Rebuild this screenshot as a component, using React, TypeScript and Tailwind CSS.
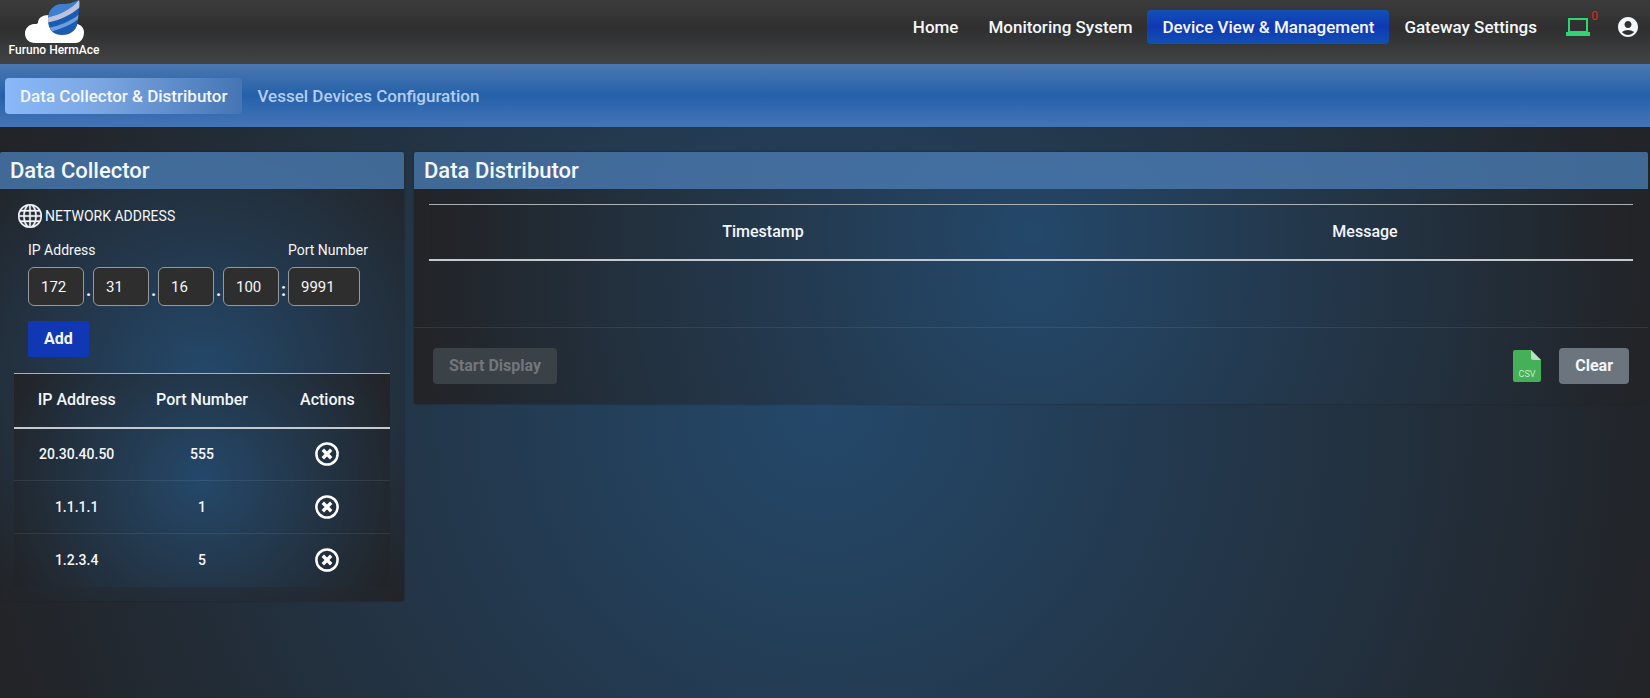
import { useState } from 'react';
import { BsGlobe } from 'react-icons/bs';
import { MdAccountCircle } from 'react-icons/md';

type Address = {
    ip: string;
    port: string;
};

const navItems = [
    'Home',
    'Monitoring System',
    'Device View & Management',
    'Gateway Settings',
];

const initialAddresses: Address[] = [
    { ip: '20.30.40.50', port: '555' },
    { ip: '1.1.1.1', port: '1' },
    { ip: '1.2.3.4', port: '5' },
];

function Logo() {
    return (
        <a href="#" className="flex w-22 flex-col items-center text-white">
            <svg viewBox="0 0 60 44" className="h-11 w-15">
                <path
                    d="M11 43C5 43 1 39 1 33.500C1 28 5 24.500 10 24C12 24 13 24 14 23C14 18 18 15 25 15L50 23C56 24 60 27 60 32C60 38 57 43 51 43Z"
                    fill="#fff"
                />
                <clipPath id="planet">
                    <path d="M24 20C24 10 30 4 38 4C43 4 47 4 55 0C56 5 55 10 54 19C54 29 48 35 38 35C29 35 24 29 24 20Z" />
                </clipPath>
                <g clipPath="url(#planet)">
                    <rect x="20" width="38" height="38" fill="#1c5cb0" />
                    <path d="M20 0H58V2C48 12 36 17 22 19Z" fill="#3f7fcd" />
                    <path
                        d="M22 18C36 15 47 10 56 -1L57 6C49 14 37 20 22 23Z"
                        fill="#bcc3dc"
                    />
                    <path
                        d="M24 28C36 26 47 21 57 13V17C48 25 37 29 26 32Z"
                        fill="#6d9fdf"
                    />
                </g>
            </svg>
            <span className="text-[12px] leading-3 font-medium whitespace-nowrap">
                Furuno HermAce
            </span>
        </a>
    );
}

function LaptopIcon() {
    return (
        <svg viewBox="0 0 24 18" className="h-[18px] w-6" fill="#2fd573">
            <path
                d="M2 0H22V14H24V18H0V14H2ZM4 2V13H20V2Z"
                fillRule="evenodd"
            />
        </svg>
    );
}

function DeleteIcon() {
    return (
        <svg
            viewBox="0 0 24 24"
            className="size-6"
            fill="none"
            stroke="#fff"
        >
            <circle cx="12" cy="12" r="10.600" strokeWidth="2.500" />
            <path
                d="M7.800 7.800L16.200 16.200M16.200 7.800L7.800 16.200"
                strokeWidth="3.400"
            />
        </svg>
    );
}

function CsvIcon() {
    return (
        <svg viewBox="0 0 28 32" className="h-8 w-7">
            <path
                d="M2 0H18L28 10V30Q28 32 26 32H2Q0 32 0 30V2Q0 0 2 0Z"
                fill="#45b058"
            />
            <path d="M18 0L28 10H20Q18 10 18 8Z" fill="#b5dfbd" />
            <text
                x="14"
                y="27"
                textAnchor="middle"
                fontSize="9"
                fontWeight="400"
                fill="#c4ecca"
            >
                CSV
            </text>
        </svg>
    );
}

function PanelTitle({ children }: { children: string }) {
    return (
        <h2 className="rounded-t-xs bg-[#4a7ab2]/80 px-[10px] py-1 text-[22px] leading-[29px] font-medium">
            {children}
        </h2>
    );
}

function OctetInput({
    id,
    label,
    defaultValue,
}: {
    id: string;
    label?: string;
    defaultValue: string;
}) {
    return (
        <input
            id={id}
            type="text"
            aria-label={label}
            defaultValue={defaultValue}
            className="h-[39px] w-14 rounded-md border border-[#96999d] bg-[#2f2e2f] px-3 text-[15px]"
        />
    );
}

function Separator({ children }: { children: string }) {
    return (
        <span className="w-[9px] text-center text-lg leading-8 font-bold">
            {children}
        </span>
    );
}

function DataCollector() {
    const [addresses, setAddresses] = useState(initialAddresses);

    return (
        <section className="w-[404px] shrink-0 rounded-xs bg-[radial-gradient(circle,#24486a,#222326)] shadow-[0_0_2px_#1b2026]">
            <PanelTitle>Data Collector</PanelTitle>
            <div className="px-[14px] pt-[15px] pb-[14px]">
                <div className="flex items-center gap-[3px] pl-1 text-[14px] leading-6">
                    <BsGlobe className="size-6" strokeWidth={0.2} />
                    NETWORK ADDRESS
                </div>

                <div className="mt-3 flex pl-[14px] text-[14px] leading-5">
                    <div>
                        <label htmlFor="octet-1">IP Address</label>
                        <div className="mt-[7px] flex items-end">
                            <OctetInput id="octet-1" defaultValue="172" />
                            <Separator>.</Separator>
                            <OctetInput
                                id="octet-2"
                                label="Octet 2"
                                defaultValue="31"
                            />
                            <Separator>.</Separator>
                            <OctetInput
                                id="octet-3"
                                label="Octet 3"
                                defaultValue="16"
                            />
                            <Separator>.</Separator>
                            <OctetInput
                                id="octet-4"
                                label="Octet 4"
                                defaultValue="100"
                            />
                            <Separator>:</Separator>
                        </div>
                    </div>
                    <div>
                        <label htmlFor="port">Port Number</label>
                        <input
                            id="port"
                            type="text"
                            defaultValue="9991"
                            className="mt-[7px] block h-[39px] w-18 rounded-md border border-[#96999d] bg-[#2f2e2f] px-3 text-[15px]"
                        />
                    </div>
                </div>

                <button
                    type="button"
                    className="mt-[15px] ml-[14px] block h-9 rounded-xs bg-[#1038b4] px-4 font-bold"
                >
                    Add
                </button>

                <table className="mt-4 w-full table-fixed bg-[radial-gradient(circle,#24486a,#222326)] text-center">
                    <thead>
                        <tr className="h-[54px] border-t border-b-2 border-t-[#a9b0b6] border-b-[#c3c9ce]">
                            <th className="font-medium">IP Address</th>
                            <th className="font-medium">Port Number</th>
                            <th className="font-medium">Actions</th>
                        </tr>
                    </thead>
                    <tbody className="text-[14px] font-medium">
                        {addresses.map((address) => (
                            <tr
                                key={address.ip}
                                className="h-[53px] border-b border-white/8 last:border-b-0"
                            >
                                <td>{address.ip}</td>
                                <td>{address.port}</td>
                                <td>
                                    <button
                                        type="button"
                                        aria-label={`Delete ${address.ip}`}
                                        onClick={() =>
                                            setAddresses((current) =>
                                                current.filter(
                                                    (item) => item !== address,
                                                ),
                                            )
                                        }
                                        className="mx-auto block"
                                    >
                                        <DeleteIcon />
                                    </button>
                                </td>
                            </tr>
                        ))}
                    </tbody>
                </table>
            </div>
        </section>
    );
}

function DataDistributor() {
    return (
        <section className="min-w-0 flex-1 rounded-xs bg-[radial-gradient(circle,#24486a,#222326)] shadow-[0_0_2px_#1b2026]">
            <PanelTitle>Data Distributor</PanelTitle>
            <div className="px-[15px] pt-[15px] pb-[66px]">
                <table className="w-full table-fixed bg-[radial-gradient(circle,#24486a,#222326)]">
                    <thead>
                        <tr className="h-[55px] border-t border-b-2 border-t-[#a9b0b6] border-b-[#c3c9ce]">
                            <th className="pl-[66px] font-medium">Timestamp</th>
                            <th className="pl-[66px] font-medium">Message</th>
                        </tr>
                    </thead>
                </table>
            </div>
            <div className="flex items-center justify-between border-t border-white/8 px-[19px] py-5 font-bold">
                <button
                    type="button"
                    disabled
                    className="h-9 rounded-sm bg-[#3a4147] px-4 text-[#71777c]"
                >
                    Start Display
                </button>
                <div className="flex items-center gap-[18px]">
                    <button type="button" aria-label="CSV">
                        <CsvIcon />
                    </button>
                    <button
                        type="button"
                        className="h-9 rounded-sm bg-[#6c757d] px-4"
                    >
                        Clear
                    </button>
                </div>
            </div>
        </section>
    );
}

export default function App() {
    return (
        <div className="flex min-h-screen flex-col bg-[#222326] font-[Roboto,sans-serif] text-[#f4f7fa]">
            <header className="flex h-16 items-start justify-between bg-linear-to-b from-[#3c3c3c] via-[#2f2f2f] via-45% to-[#414345] px-[10px]">
                <Logo />
                <nav className="mt-[10px] flex items-center text-[17px] font-medium">
                    {navItems.map((item) => (
                        <a
                            key={item}
                            href="#"
                            className={`rounded-sm px-[15px] py-[5px] leading-6 ${
                                item === 'Device View & Management'
                                    ? 'bg-linear-to-b from-[#1250b8] via-[#1038b4] to-[#1250b4]'
                                    : ''
                            }`}
                        >
                            {item}
                        </a>
                    ))}
                    <a href="#" className="relative ml-[14px]">
                        <LaptopIcon />
                        <span className="absolute -top-2 -right-2 text-[12px] leading-3 font-normal text-[#e0281c]">
                            0
                        </span>
                    </a>
                    <a href="#" className="ml-[26px]">
                        <MdAccountCircle className="size-6" />
                    </a>
                </nav>
            </header>

            <nav className="flex h-[63px] items-center bg-linear-to-b from-[#4a77b0] via-[#2461aa] to-[#4574b6] pl-[5px] text-[17px] font-medium">
                <a
                    href="#"
                    className="rounded-sm bg-linear-to-r from-[#8ab8f8] via-[#7ba6e2] via-40% to-[#4575b4] px-[15px] py-[6px] leading-6"
                >
                    Data Collector &amp; Distributor
                </a>
                <a
                    href="#"
                    className="px-[15px] py-[6px] leading-6 text-[#b5cdf0]"
                >
                    Vessel Devices Configuration
                </a>
            </nav>

            <main className="flex flex-1 items-start gap-[10px] bg-[radial-gradient(circle,#24486a,#222326)] pt-[25px] pr-[2px]">
                <DataCollector />
                <DataDistributor />
            </main>
        </div>
    );
}
